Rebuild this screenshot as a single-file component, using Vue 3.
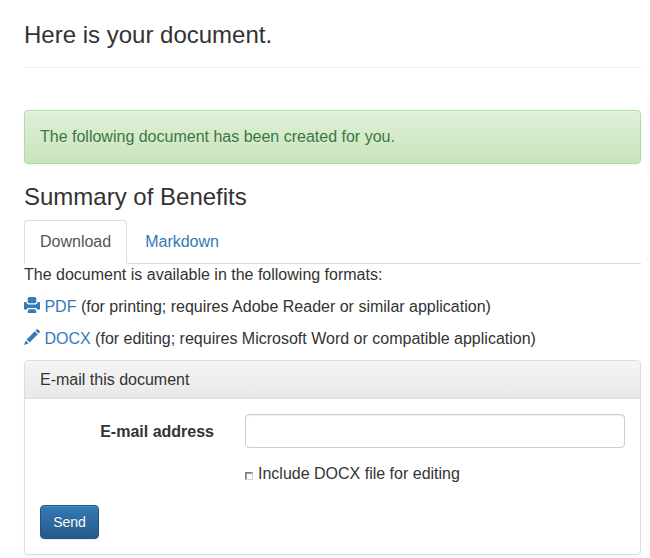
<script setup>
import { ref } from 'vue'

const tabs = ['Download', 'Markdown']
const activeTab = ref('Download')
const email = ref('')
const includeDocx = ref(false)
</script>

<template>
  <main class="page">
    <header class="page-header">
      <h3>Here is your document.</h3>
    </header>

    <div class="alert">The following document has been created for you.</div>

    <h3 class="title">Summary of Benefits</h3>

    <ul class="tabs">
      <li v-for="tab in tabs" :key="tab">
        <a :class="{ active: tab === activeTab }" @click="activeTab = tab">{{ tab }}</a>
      </li>
    </ul>

    <p>The document is available in the following formats:</p>
    <p>
      <a class="link"><svg class="icon" viewBox="0 0 16 16" aria-hidden="true">
        <path d="M5 0h6l1.300 1.600v3.700l-1.200.9H4.900l-1.200-.9V1.600z" />
        <path d="M.6 5h2v1.200L4.200 7.400h7.600l1.600-1.200V5h2l.6.6v7h-2.900L12.300 11H3.700l-.8 1.600H0v-7z" />
        <path d="M4.500 12.300h7l1 3-.6.7H4.100l-.6-.7z" />
      </svg> PDF</a> (for printing; requires Adobe Reader or similar application)
    </p>
    <p>
      <a class="link"><svg class="icon" viewBox="0 0 16 16" aria-hidden="true">
        <path d="M12.600.4q.7-.7 1.400 0l1.600 1.600q.7.7 0 1.400l-1.100 1.100-3-3zM10.800 2.200l3 3-8.200 8.200-3-3zM1.700 11.400l2.900 2.900L0 16z" />
      </svg> DOCX</a> (for editing; requires Microsoft Word or compatible application)
    </p>

    <section class="panel">
      <div class="panel-heading">E-mail this document</div>
      <form class="panel-body" @submit.prevent>
        <div class="row">
          <label class="field-label" for="email">E-mail address</label>
          <input id="email" v-model="email" class="control" type="text" />
        </div>
        <label class="check">
          <input v-model="includeDocx" class="box" type="checkbox" />
          <span>Include DOCX file for editing</span>
        </label>
        <button class="btn" type="submit">Send</button>
      </form>
    </section>
  </main>
</template>

<style>
body {
  background: #fff;
  overflow: hidden;
}
</style>

<style scoped>
.page {
  box-sizing: border-box;
  width: 650px;
  height: 558px;
  padding: 22px 9px 0 24px;
  overflow: hidden;
  color: #333;
  font: 16px/22px "Liberation Sans", Arial, sans-serif;
}
.page * {
  box-sizing: border-box;
}
h3 {
  margin: 0;
  font-size: 24px;
  font-weight: 400;
  line-height: 26px;
}
.page-header {
  height: 46px;
  margin-bottom: 42px;
  border-bottom: 1px solid #eee;
}
.alert {
  height: 54px;
  padding: 15px;
  border: 1px solid #b2dba1;
  border-radius: 4px;
  color: #3c763d;
  background: linear-gradient(#dff0d8, #c8e5bc);
  box-shadow: inset 0 1px 0 rgba(255, 255, 255, .25), 0 1px 2px rgba(0, 0, 0, .05);
  text-shadow: 0 1px 0 rgba(255, 255, 255, .2);
}
.title {
  margin: 20px 0 10px;
}
.tabs {
  display: flex;
  gap: 2px;
  height: 44px;
  margin: 0;
  padding: 0;
  list-style: none;
  border-bottom: 1px solid #ddd;
}
.tabs a {
  display: block;
  height: 44px;
  padding: 10px 15px;
  border: 1px solid transparent;
  border-radius: 4px 4px 0 0;
  color: #337ab7;
  cursor: pointer;
}
.tabs a.active {
  border-color: #ddd #ddd transparent;
  color: #555;
  background: #fff;
}
p {
  margin: 0 0 10px;
}
.link {
  color: #337ab7;
  cursor: pointer;
}
.icon {
  position: relative;
  top: 1px;
  width: 16px;
  height: 16px;
  fill: currentColor;
  vertical-align: baseline;
}
.panel {
  height: 195px;
  border: 1px solid #ddd;
  border-radius: 4px;
  box-shadow: 0 1px 2px rgba(0, 0, 0, .05);
}
.panel-heading {
  height: 38px;
  padding: 10px 15px;
  border-bottom: 1px solid #ddd;
  border-radius: 3px 3px 0 0;
  background: linear-gradient(#f5f5f5, #e8e8e8);
  line-height: 17px;
}
.panel-body {
  padding: 15px;
}
.row {
  display: grid;
  grid-template-columns: 174px 380px;
  column-gap: 31px;
  margin-bottom: 15px;
}
.field-label {
  padding-top: 7px;
  font-weight: 700;
  text-align: right;
}
.control {
  height: 34px;
  padding: 6px 12px;
  border: 1px solid #ccc;
  border-radius: 4px;
  outline: 0;
  background: #fff;
  box-shadow: inset 0 1px 1px rgba(0, 0, 0, .075);
  font: inherit;
}
.check {
  display: flex;
  align-items: center;
  gap: 5px;
  width: max-content;
  height: 22px;
  margin: 0 0 20px 205px;
}
.box {
  width: 8px;
  height: 8px;
  margin: 4px 0 0;
  appearance: none;
  border: 1px solid;
  border-color: #808080 #d4d0c8 #d4d0c8 #808080;
  background: #fff;
  box-shadow: inset 1px 1px 0 #a09d98;
}
.btn {
  display: block;
  width: 59px;
  height: 34px;
  padding: 6px 12px;
  border: 1px solid #245580;
  border-radius: 4px;
  color: #fff;
  background: linear-gradient(#337ab7, #265a88);
  box-shadow: inset 0 1px 0 rgba(255, 255, 255, .15), 0 1px 1px rgba(0, 0, 0, .075);
  font: 14px/20px "Liberation Sans", Arial, sans-serif;
  text-shadow: 0 -1px 0 rgba(0, 0, 0, .2);
}
</style>
